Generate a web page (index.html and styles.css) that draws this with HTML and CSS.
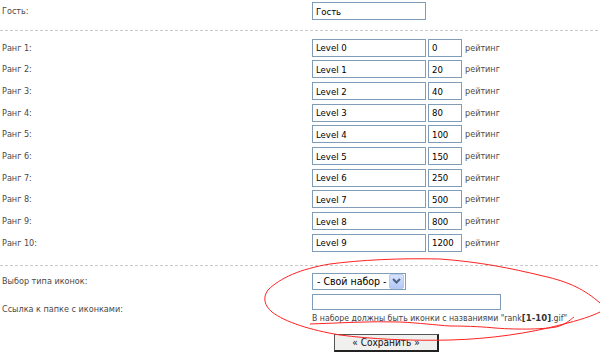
FILE: index.html
```html
<!DOCTYPE html>
<html lang="ru">
<head>
    <meta charset="UTF-8">
    <title>Ранги пользователей</title>
    <link rel="stylesheet" href="styles.css">
</head>
<body>
    <form class="settings">
        <div class="row guest">
            <div class="label">Гость:</div>
            <div class="field"><input class="text wide" value="Гость"></div>
        </div>

        <div class="sep"></div>

        <div class="ranks">
            <div class="row rank"><div class="label">Ранг 1:</div><div class="field"><input class="text wide" value="Level 0"><input class="text small" value="0"><span class="unit">рейтинг</span></div></div>
            <div class="row rank"><div class="label">Ранг 2:</div><div class="field"><input class="text wide" value="Level 1"><input class="text small" value="20"><span class="unit">рейтинг</span></div></div>
            <div class="row rank"><div class="label">Ранг 3:</div><div class="field"><input class="text wide" value="Level 2"><input class="text small" value="40"><span class="unit">рейтинг</span></div></div>
            <div class="row rank"><div class="label">Ранг 4:</div><div class="field"><input class="text wide" value="Level 3"><input class="text small" value="80"><span class="unit">рейтинг</span></div></div>
            <div class="row rank"><div class="label">Ранг 5:</div><div class="field"><input class="text wide" value="Level 4"><input class="text small" value="100"><span class="unit">рейтинг</span></div></div>
            <div class="row rank"><div class="label">Ранг 6:</div><div class="field"><input class="text wide" value="Level 5"><input class="text small" value="150"><span class="unit">рейтинг</span></div></div>
            <div class="row rank"><div class="label">Ранг 7:</div><div class="field"><input class="text wide" value="Level 6"><input class="text small" value="250"><span class="unit">рейтинг</span></div></div>
            <div class="row rank"><div class="label">Ранг 8:</div><div class="field"><input class="text wide" value="Level 7"><input class="text small" value="500"><span class="unit">рейтинг</span></div></div>
            <div class="row rank"><div class="label">Ранг 9:</div><div class="field"><input class="text wide" value="Level 8"><input class="text small" value="800"><span class="unit">рейтинг</span></div></div>
            <div class="row rank"><div class="label">Ранг 10:</div><div class="field"><input class="text wide" value="Level 9"><input class="text small" value="1200"><span class="unit">рейтинг</span></div></div>
        </div>

        <div class="sep"></div>

        <div class="row type">
            <div class="label">Выбор типа иконок:</div>
            <div class="field">
                <div class="select">
                    <span class="select-value">- Свой набор -</span>
                    <span class="select-arrow">
                        <svg width="9" height="6" viewBox="0 0 9 6"><path d="M1 1 L4.5 4.5 L8 1" fill="none" stroke="#4d6185" stroke-width="2"/></svg>
                    </span>
                </div>
            </div>
        </div>

        <div class="row link">
            <div class="label">Ссылка к папке с иконками:</div>
            <div class="field">
                <input class="text url" value="">
                <div class="hint">В наборе должны быть иконки с названиями "rank<b>[1-10]</b>.gif"</div>
            </div>
        </div>

        <div class="actions">
            <button type="button" class="save">« Сохранить »</button>
        </div>

        <!-- hand-drawn marks over the icons block -->
        <svg class="marks" width="600" height="357" viewBox="0 0 600 357">
            <path d="M600 303 C585 290 570 282 543 276 C510 268 480 262 440 259 C400 258 360 260 330 264 C300 269 280 278 268 290 C262 298 265 306 272 312 C285 322 310 330 340 335 C370 339 410 341 450 340 C490 339 530 333 560 325 C580 320 592 316 600 312" fill="none" stroke="#f22" stroke-width="1"/>
            <path d="M310 324 C340 323 370 321 400 322 C420 323 435 325 450 326 C470 326 485 327 495 328 C520 330 545 329 556 327 C565 325 570 320 574 317" fill="none" stroke="#f22" stroke-width="1"/>
        </svg>
    </form>
</body>
</html>
```

FILE: styles.css
```css
* {
    margin: 0;
    padding: 0;
    box-sizing: border-box;
}

body {
    width: 600px;
    height: 357px;
    background: #fff;
    font-family: 'DejaVu Sans Condensed', 'Liberation Sans', sans-serif;
    font-size: 9px;
    color: #4a4a4a;
    overflow: hidden;
}

.settings {
    position: relative;
    height: 357px;
}

.row {
    display: grid;
    grid-template-columns: 312px 1fr;
    align-items: center;
}

.label {
    padding-left: 2px;
}

.field {
    display: flex;
    align-items: center;
    gap: 2px;
}

.guest {
    height: 22px;
}

.sep {
    height: 1px;
    margin-top: 8px;
    background: repeating-linear-gradient(90deg, #c8c8c8 0 3px, transparent 3px 5px);
}

.ranks {
    margin-top: 6px;
}

.rank {
    height: 21.67px;
}

.ranks + .sep {
    margin-top: 11px;
}

.text {
    height: 18px;
    border: 1px solid #7f9db9;
    background: #fff;
    padding: 0 3px;
    font-family: 'DejaVu Sans Condensed', 'Liberation Sans', sans-serif;
    font-size: 9.5px;
    color: #000;
    outline: none;
}

.wide {
    width: 114px;
}

.small {
    width: 34px;
}

.unit {
    margin-left: 1px;
}

.type {
    margin-top: 7px;
}

.select {
    display: flex;
    align-items: center;
    width: 94px;
    height: 17px;
    border: 1px solid #7f9db9;
    background: #fff;
    padding: 1px;
    color: #000;
    font-size: 10.5px;
    white-space: nowrap;
}

.select-value {
    flex: 1;
    padding-left: 3px;
}

.select-arrow {
    display: flex;
    align-items: center;
    justify-content: center;
    width: 15px;
    height: 15px;
    background: linear-gradient(#d6e3fe, #b3c8f5);
    border: 1px solid #b6c9ee;
    border-radius: 2px;
}

.link {
    margin-top: 4px;
}

.link .field {
    flex-direction: column;
    align-items: flex-start;
    gap: 1px;
}

.url {
    width: 189px;
    height: 16px;
}

.hint {
    color: #444;
    font-size: 8.7px;
    line-height: 13px;
    white-space: nowrap;
}

.hint b {
    font-size: 9.5px;
    color: #333;
}

.actions {
    padding-left: 334px;
    margin-top: 9px;
}

.save {
    width: 105px;
    height: 18px;
    background: #f0f0ee;
    border: 1px solid #555;
    border-right: 2px solid #222;
    border-bottom: 2px solid #222;
    font-family: 'DejaVu Sans Condensed', 'Liberation Sans', sans-serif;
    font-size: 10px;
    color: #111;
}

.marks {
    position: absolute;
    left: 0;
    top: 0;
    pointer-events: none;
}
```
